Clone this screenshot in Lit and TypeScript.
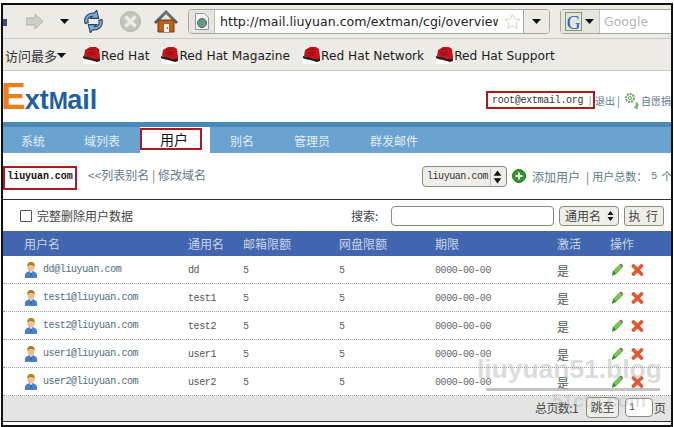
import { LitElement, html, css, svg } from "lit";
import { customElement } from "lit/decorators.js";

const redhat = svg`<svg class="rh" width="17" height="17" viewBox="0 0 17 17"><path d="M0 0h17v17H0z" fill="#f2f1ec"/><path d="M0 12h17v5H0z" fill="#fff"/><path d="M1 9 2 3l5-3 6 0 3 2 1 8v2H12L6 11z" fill="#c4141c"/><path d="M0 9l5 1 7 2h5v2l-3 1-7-2-5-1-2-1z" fill="#2a1c1c"/><path d="M5 3l6-1M4 6l8-1M6 8l6-1" stroke="#86101a" stroke-width="1" fill="none"/></svg>`;

const user = svg`<svg class="ic" width="14" height="16" viewBox="0 0 14 16"><path d="M1 16c-1-5 2-7 6-7s7 2 6 7z" fill="#4a80c8"/><path d="M5.500 9 7 14l1.500-5z" fill="#e8e8ee"/><path d="M7 10l-1 2 1 3 1-3z" fill="#24508c"/><ellipse cx="7" cy="5" rx="3.500" ry="4.200" fill="#eebd8a"/><path d="M3.300 5C2.800 1 5 0 7 0s4.300 1 3.700 5C10 3.500 9 3 7 3S4 3.500 3.300 5z" fill="#b07a28"/></svg>`;

const pencil = svg`<svg class="ic" width="11" height="13" viewBox="0 0 12 13"><path d="M0 13 1.500 8 8.500 1l3 3L4.500 11z" fill="#72c653" stroke="#4b9f36" stroke-width=".6"/><path d="M8.500 1 10 0l2 2-.5 2z" fill="#a5524a"/><path d="M0 13l1.500-5 3 3z" fill="#3a8a2a"/></svg>`;

const cross = svg`<svg class="ic" width="13" height="12" viewBox="0 0 13 12"><path d="M2.500 2l8 8M10.500 2l-8 8" stroke="#dc5a34" stroke-width="3.800" stroke-linecap="round"/></svg>`;

const spinner = svg`<svg class="spin" width="7" height="12" viewBox="0 0 7 12"><path d="M3.500 1 6.500 5H.5zM3.500 11 .5 7h6z" fill="#111"/></svg>`;

const rows = [
  ["dd@liuyuan.com", "dd"],
  ["test1@liuyuan.com", "test1"],
  ["test2@liuyuan.com", "test2"],
  ["user1@liuyuan.com", "user1"],
  ["user2@liuyuan.com", "user2"],
];

@customElement("app-root")
export class AppRoot extends LitElement {
  static styles = css`
    :host { display: block; width: 674px; height: 427px; overflow: hidden; background: #fff; position: relative; font-family: "Noto Sans CJK SC", "Liberation Sans", sans-serif; }
    *, *::after { box-sizing: border-box; }
    .frame { margin: 3px 0 0 1px; width: 672px; height: 424px; border: 2px solid #111; display: flex; flex-direction: column; overflow: hidden; position: relative; }

    .nav { height: 34px; background: #ecebe5; border-bottom: 1px solid #c9c8c0; display: flex; align-items: center; flex: none; position: relative; }
    .backend { width: 4px; height: 7px; background: #3a5272; margin-top: 2px; flex: none; }
    .fwd { margin-left: 19px; flex: none; }
    .drop { margin-left: 17px; flex: none; }
    .reload { margin-left: 13px; flex: none; }
    .stop { margin-left: 15px; flex: none; }
    .home { margin-left: 13px; flex: none; }
    .url { margin-left: 10px; width: 362px; height: 25px; border: 1px solid #a8a79f; border-radius: 4px; background: #fff; display: flex; align-items: center; flex: none; overflow: hidden; }
    .fav { width: 26px; height: 100%; background: #e6e5df; border-right: 1px solid #bbb; display: flex; align-items: center; justify-content: center; flex: none; }
    .addr { font: 12.6px "DejaVu Sans", sans-serif; color: #222; margin-left: 5px; width: 278px; overflow: hidden; white-space: nowrap; flex: none; }
    .star { margin-left: 6px; flex: none; }
    .urlbtn { margin-left: 2px; width: 26px; height: 100%; border-left: 1px solid #a8a79f; background: #ecebe5; display: flex; align-items: center; justify-content: center; flex: none; }
    .search { margin-left: 10px; flex: 1; height: 25px; border: 1px solid #a8a79f; border-right: 0; border-radius: 4px 0 0 4px; background: #fff; display: flex; align-items: center; }
    .engine { width: 39px; height: 100%; background: #e6e5df; border-right: 1px solid #c5c4bc; display: flex; align-items: center; gap: 3px; padding-left: 4px; flex: none; }
    .g { font: 19px/19px "Liberation Serif", serif; color: #1f5fb5; border: 1px solid #7a9a5a; width: 17px; height: 19px; text-align: center; }
    .gtext { font: 12.5px "DejaVu Sans", sans-serif; color: #b5b5b5; margin-left: 4px; }

    .marks { height: 32px; background: #ecebe5; border-bottom: 1px solid #c9c8c0; display: flex; align-items: center; flex: none; padding-top: 2px; }
    .most { font-size: 13px; color: #333; margin-left: 2px; width: 52px; white-space: nowrap; }
    .mark { display: flex; align-items: center; gap: 1px; font: 12.2px "DejaVu Sans", sans-serif; color: #1c1c1c; white-space: nowrap; flex: none; }
    .mark.a { margin-left: 17px; }
    .mark.b { margin-left: 12px; }
    .mark.c { margin-left: 13px; }
    .mark.d { margin-left: 12px; }

    .head { height: 51px; display: flex; align-items: center; flex: none; position: relative; }
    .logo { font: bold 27px/1 "Liberation Sans", sans-serif; color: #1f5f9e; white-space: nowrap; margin-left: -2px; flex: none; }
    .logo b { font-size: 37px; color: #e8801e; letter-spacing: -1px; }
    .logo i { font-style: normal; font-size: 23px; letter-spacing: -.6px; }
    .userbar { margin-left: auto; display: flex; align-items: center; font-size: 10px; color: #5a7a8c; margin-top: 7px; white-space: nowrap; width: 185px; flex: none; }
    .userbox { width: 109px; height: 18px; border: 2px solid #b01820; display: flex; align-items: center; justify-content: space-between; padding: 0 0 0 4px; font: 10px "Liberation Mono", monospace; letter-spacing: -.3px; color: #333; flex: none; }
    .userbox span { font-family: "Liberation Sans", sans-serif; color: #999; margin-right: 2px; }
    .sep { margin: 0 3px 0 2px; font-size: 11px; }
    .gear { flex: none; }

    .tabs { height: 31px; background: #6aa3d0; border-top: 5px solid #4a88b9; display: flex; flex: none; align-items: stretch; font-size: 12px; color: #e4eef7; position: relative; }
    .tab { display: flex; align-items: center; flex: none; padding-top: 1px; white-space: nowrap; }
    .t1 { margin-left: 18px; width: 63px; }
    .t2 { width: 56px; }
    .active { width: 70px; background: #fff; color: #111; font-size: 14px; padding: 0 0 3px 20px; position: relative; }
    .active::after { content: ""; position: absolute; left: 0; top: 1px; width: 62px; height: 22px; border: 2px solid #b01820; }
    .t4 { margin-left: 20px; width: 64px; }
    .t5 { width: 76px; }

    .bar { height: 47px; border-bottom: 1px solid #333; display: flex; align-items: center; flex: none; font-size: 12px; color: #667a85; position: relative; }
    .domain { width: 74px; height: 24px; border: 2px solid #b01820; font: bold 10px "Liberation Mono", monospace; color: #111; display: flex; align-items: center; justify-content: center; margin-top: 3px; padding-bottom: 2px; letter-spacing: -.05px; white-space: nowrap; flex: none; }
    .links { margin-left: 11px; margin-top: -3px; white-space: nowrap; flex: none; width: 117px; }
    .sel { height: 21px; width: 85px; margin-left: 217px; border: 1px solid #8a897f; border-radius: 4px; background: #efeee9; display: flex; align-items: center; justify-content: space-between; padding: 0 4px 0 4px; font: 10px "Liberation Mono", monospace; letter-spacing: -.45px; color: #333; flex: none; margin-top: 1px; }
    .sel .spin { border-left: 1px solid #bbb; padding-left: 2px; width: 12px; height: 16px; }
    .plus { margin-left: 5px; flex: none; }
    .total { margin-left: 6px; white-space: nowrap; display: flex; align-items: center; flex: none; }
    .total .pipe { margin: 0 3px 0 6px; }
    .total .small { font-size: 11px; }
    .total em { font: normal 10px "Liberation Mono", monospace; margin: 0 4px 0 4px; }

    .tools { height: 31px; display: flex; align-items: center; flex: none; font-size: 12px; color: #444; }
    .check { width: 12px; height: 12px; margin-left: 17px; border: 1px solid #555; border-radius: 1px; flex: none; background: #fff; }
    .tools .lbl { margin-left: 5px; width: 95px; white-space: nowrap; flex: none; }
    .find { margin-left: 219px; width: 40px; white-space: nowrap; flex: none; }
    .inp { width: 163px; height: 20px; border: 1px solid #8a897f; border-radius: 4px; background: #fff; flex: none; }
    .sel2 { width: 60px; height: 20px; margin-left: 5px; border: 1px solid #8a897f; border-radius: 4px; background: #efeee9; display: flex; align-items: center; justify-content: space-between; padding: 0 4px 0 5px; flex: none; white-space: nowrap; }
    .btn { margin-left: 5px; width: 40px; height: 20px; border: 1px solid #8a897f; border-radius: 3px; background: #efeee9; display: flex; align-items: center; justify-content: center; letter-spacing: 1.5px; white-space: nowrap; flex: none; }

    .grid { display: grid; grid-template-columns: 164px 55px 96px 96px 122px 53px 1fr; padding-left: 21px; align-items: center; }
    .thead { height: 25px; background: #4165ae; color: #c9d6ea; font-size: 12px; flex: none; }
    .row { height: 28px; border-bottom: 1px dotted #999; font-size: 12px; color: #555; flex: none; padding-top: 2px; }
    .cell-name { display: flex; align-items: center; gap: 5px; margin-top: -2px; }
    .mono { font: 10px "Liberation Mono", monospace; letter-spacing: -.4px; }
    .cell-name .mono { color: #4d6e7c; }
    .num { color: #666; }
    .date { color: #666; letter-spacing: -.4px; }
    .ops { display: flex; align-items: center; gap: 8px; margin-left: 2px; margin-top: -2px; }

    .foot { height: 26px; flex: none; background: #e4e4e4; display: flex; align-items: center; justify-content: flex-end; padding-right: 5px; padding-bottom: 2px; font-size: 12px; color: #444; border-bottom: 1px solid #333; white-space: nowrap; }
    .foot .count { letter-spacing: -.6px; }
    .jump { width: 33px; height: 21px; margin: 0 6px 0 8px; border: 1px solid #8a897f; border-radius: 4px; background: #efeee9; text-align: center; line-height: 18px; flex: none; }
    .pg { width: 28px; height: 19px; border: 1px solid #8a897f; border-radius: 4px; background: #fff; font: 10px/17px "Liberation Mono", monospace; padding-left: 3px; margin-right: 1px; flex: none; }

    .wm { position: absolute; left: 477px; top: 354px; width: 190px; color: rgba(180,180,180,.48); font: bold 26.4px/30px "Liberation Sans", sans-serif; pointer-events: none; white-space: nowrap; }
    .wm .ul { height: 3px; width: 174px; margin: 4px 0 0 9px; background: rgba(170,170,170,.7); }
    .wm .sub { font-size: 19px; line-height: 20px; margin-left: 75px; color: rgba(170,170,170,.35); }
  `;

  render() {
    return html`
      <div class="frame">
        <div class="nav">
          <div class="backend"></div>
          <svg class="fwd" width="17" height="15" viewBox="0 0 17 15"><path d="M0 4h9V0l8 7.500L9 15v-4H0z" fill="#cfcfca" stroke="#b2b2ab"/></svg>
          <svg class="drop" width="9" height="5" viewBox="0 0 9 5"><path d="M0 0h9L4.500 5z" fill="#111"/></svg>
          <svg class="reload" width="23" height="23" viewBox="0 0 22 22"><path d="M3 13C1 7 6 2 12 3l2-3 2 8-8 0 2-2C6 6 5 9 6 12z" fill="#7fa9d6" stroke="#2a3f5c"/><path d="M19 9c2 6-3 11-9 10l-2 3-2-8 8 0-2 2c4 0 5-3 4-6z" fill="#7fa9d6" stroke="#2a3f5c"/></svg>
          <svg class="stop" width="21" height="21" viewBox="0 0 21 21"><circle cx="10.500" cy="10.500" r="10" fill="#c4c4bf" stroke="#b0b0aa"/><path d="M6.500 6.500l8 8M14.500 6.500l-8 8" stroke="#ecebe5" stroke-width="3.600" stroke-linecap="round"/></svg>
          <svg class="home" width="24" height="23" viewBox="0 0 24 23"><path d="M4 10v12h16V10z" fill="#bf5f1a" stroke="#6b3410"/><path d="M0 12 12 0l12 12-2 2L12 4 2 14z" fill="#555"/><path d="M12 1 22 11l-10-7-10 7z" fill="#777"/><path d="M10 14h5v8h-5z" fill="#f4f0ea"/><circle cx="13.500" cy="18" r=".7" fill="#333"/></svg>
          <div class="url">
            <div class="fav"><svg width="14" height="17" viewBox="0 0 14 17"><path d="M.5.500h9l4 4v12H.500z" fill="#f4f4f4" stroke="#8a9aa8"/><circle cx="7" cy="10" r="4.500" fill="#6a9a7a" stroke="#3a6a8a"/></svg></div>
            <div class="addr">http://mail.liuyuan.com/extman/cgi/overview</div>
            <svg class="star" width="17" height="17" viewBox="0 0 17 17"><path d="M8.500 1l2.300 5 5.200.6-3.900 3.500 1.100 5.400-4.700-2.800-4.700 2.800 1.100-5.400L1 6.600 6.200 6z" fill="#fff" stroke="#d4d4ce"/></svg>
            <div class="urlbtn"><svg width="9" height="5" viewBox="0 0 9 5"><path d="M0 0h9L4.500 5z" fill="#111"/></svg></div>
          </div>
          <div class="search">
            <div class="engine"><span class="g">G</span><svg width="9" height="5" viewBox="0 0 9 5"><path d="M0 0h9L4.500 5z" fill="#111"/></svg></div>
            <span class="gtext">Google</span>
          </div>
        </div>
        <div class="marks">
          <span class="most">访问最多</span>
          <svg width="9" height="5" viewBox="0 0 9 5"><path d="M0 0h9L4.500 5z" fill="#111"/></svg>
          <span class="mark a">${redhat}Red Hat</span>
          <span class="mark b">${redhat}Red Hat Magazine</span>
          <span class="mark c">${redhat}Red Hat Network</span>
          <span class="mark d">${redhat}Red Hat Support</span>
        </div>
        <div class="head">
          <div class="logo"><b>E</b>xt<i>M</i>ail</div>
          <div class="userbar">
            <div class="userbox">root@extmail.org<span>|</span></div>
            <span>退出</span><span class="sep">|</span>
            <svg class="gear" width="18" height="17" viewBox="0 0 18 17"><circle cx="7" cy="6" r="4" fill="none" stroke="#6f9a5f" stroke-width="2" stroke-dasharray="2 1"/><circle cx="7" cy="6" r="1.500" fill="none" stroke="#6f9a5f"/><path d="M14 10v7M12 12h3v2h-3v2h3" stroke="#6f9a5f" fill="none"/></svg>
            <span>自愿捐</span>
          </div>
        </div>
        <div class="tabs">
          <div class="tab t1">系统</div>
          <div class="tab t2">域列表</div>
          <div class="tab active">用户</div>
          <div class="tab t4">别名</div>
          <div class="tab t5">管理员</div>
          <div class="tab">群发邮件</div>
        </div>
        <div class="bar">
          <div class="domain">liuyuan.com</div>
          <div class="links">&lt;&lt;列表别名 | 修改域名</div>
          <div class="sel">liuyuan.com${spinner}</div>
          <svg class="plus" width="14" height="14" viewBox="0 0 14 14"><circle cx="7" cy="7" r="6.500" fill="#2f9a22" stroke="#1f7a18"/><path d="M7 3.500v7M3.500 7h7" stroke="#fff" stroke-width="2"/></svg>
          <div class="total">添加用户<span class="pipe">|</span><span class="small">用户总数：</span><em>5</em><span class="small">个</span></div>
        </div>
        <div class="tools">
          <div class="check"></div>
          <div class="lbl">完整删除用户数据</div>
          <div class="find">搜索:</div>
          <div class="inp"></div>
          <div class="sel2">通用名${spinner}</div>
          <div class="btn">执 行</div>
        </div>
        <div class="grid thead">
          <span>用户名</span><span>通用名</span><span>邮箱限额</span><span>网盘限额</span><span>期限</span><span>激活</span><span>操作</span>
        </div>
        ${rows.map(
          ([mail, name]) => html`
            <div class="grid row">
              <div class="cell-name">${user}<span class="mono">${mail}</span></div>
              <span class="mono">${name}</span>
              <span class="mono num">5</span>
              <span class="mono num">5</span>
              <span class="mono date">0000-00-00</span>
              <span>是</span>
              <div class="ops">${pencil}${cross}</div>
            </div>
          `
        )}
        <div class="foot">
          <span class="count">总页数:1</span>
          <div class="jump">跳至</div>
          <div class="pg">1</div>
          <span>页</span>
        </div>
      </div>
      <div class="wm">
        liuyuan51.blog
        <div class="ul"></div>
        <div class="sub">51cto.com</div>
      </div>
    `;
  }
}
